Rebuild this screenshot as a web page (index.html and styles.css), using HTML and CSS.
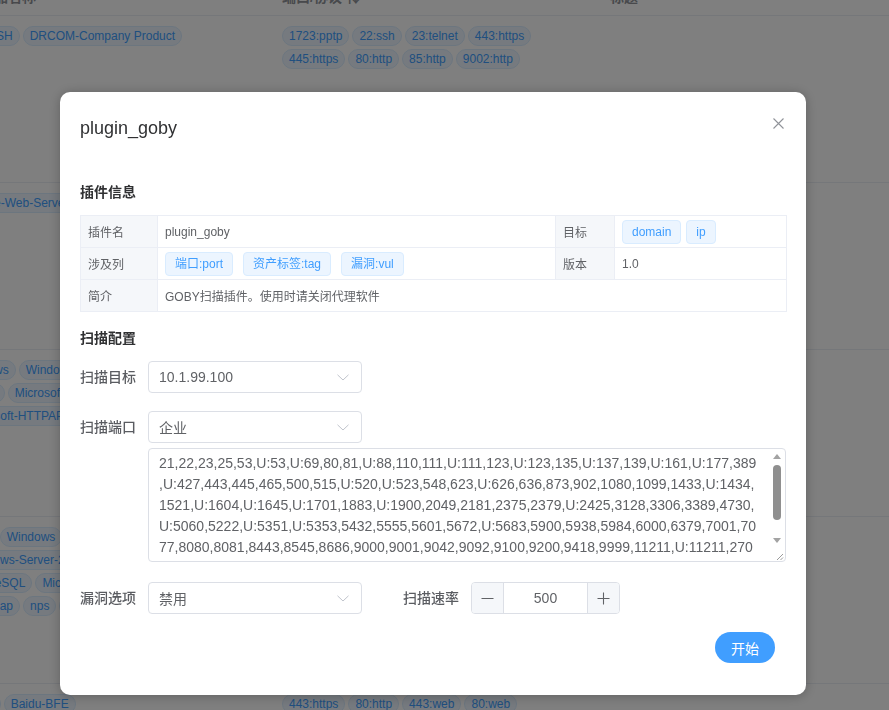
FILE: index.html
```html
<!DOCTYPE html>
<html lang="zh-CN">
<head>
<meta charset="utf-8">
<title>plugin_goby</title>
<link rel="stylesheet" href="styles.css">
</head>
<body>
<div class="page">
  <div class="grid-head">
    <div class="hcell">产品名称</div>
    <div class="hcell">端口/协议 ⇅</div>
    <div class="hcell">标题</div>
  </div>

  <div class="grid-row">
    <div class="cell">
      <div class="tagline o41"><span class="btag">SSH</span><span class="btag">DRCOM-Company Product</span></div>
    </div>
    <div class="cell">
      <div class="tagwrap">
        <span class="btag">1723:pptp</span><span class="btag">22:ssh</span><span class="btag">23:telnet</span><span class="btag">443:https</span>
        <span class="btag">445:https</span><span class="btag">80:http</span><span class="btag">85:http</span><span class="btag">9002:http</span>
      </div>
    </div>
    <div class="cell"></div>
  </div>

  <div class="grid-row">
    <div class="cell">
      <div class="tagline o13"><span class="btag">Apache-Web-Server</span></div>
    </div>
    <div class="cell"><div class="tagwrap"><span class="btag">80:http</span><span class="btag">443:https</span></div></div>
    <div class="cell"></div>
  </div>

  <div class="grid-row">
    <div class="cell">
      <div class="tagline o13"><span class="btag">Windows</span><span class="btag">Windows-Server-2012</span></div>
      <div class="tagline o36"><span class="btag">IIS</span><span class="btag">Microsoft-IIS</span></div>
      <div class="tagline o18"><span class="btag">Microsoft-HTTPAPI</span></div>
    </div>
    <div class="cell"><div class="tagwrap"><span class="btag">80:http</span><span class="btag">135:msrpc</span></div></div>
    <div class="cell"></div>
  </div>

  <div class="grid-row">
    <div class="cell">
      <div class="tagline o28"><span class="btag">IIS</span><span class="btag">Windows</span></div>
      <div class="tagline o19"><span class="btag">Windows-Server-2008</span></div>
      <div class="tagline o13"><span class="btag">PostgreSQL</span><span class="btag">Microsoft-SQL-Server</span></div>
      <div class="tagline o36"><span class="btag">nmap</span><span class="btag">nps</span><span class="btag">frp</span></div>
    </div>
    <div class="cell"><div class="tagwrap"><span class="btag">1433:mssql</span><span class="btag">5432:postgres</span></div></div>
    <div class="cell"></div>
  </div>

  <div class="grid-row">
    <div class="cell">
      <div class="tagline o32"><span class="btag">IIS</span><span class="btag">Baidu-BFE</span></div>
    </div>
    <div class="cell">
      <div class="tagwrap"><span class="btag">443:https</span><span class="btag">80:http</span><span class="btag">443:web</span><span class="btag">80:web</span></div>
    </div>
    <div class="cell"></div>
  </div>
</div>

<div class="overlay">
  <div class="dialog">
    <div class="dialog-header">
      <span class="dialog-title">plugin_goby</span>
      <button class="dialog-close" aria-label="close">
        <svg width="11" height="11" viewBox="0 0 11 11"><path d="M0.5 0.5 L10.5 10.5 M10.5 0.5 L0.5 10.5" stroke="#909399" stroke-width="1.1" fill="none"/></svg>
      </button>
    </div>
    <div class="dialog-body">
      <div class="section-title">插件信息</div>
      <table class="desc">
        <colgroup><col class="c1"><col class="c2"><col class="c3"><col class="c4"></colgroup>
        <tr>
          <td class="lbl">插件名</td>
          <td class="val">plugin_goby</td>
          <td class="lbl">目标</td>
          <td class="val"><span class="tag gap5">domain</span><span class="tag gap5">ip</span></td>
        </tr>
        <tr>
          <td class="lbl">涉及列</td>
          <td class="val"><span class="tag gap10">端口:port</span><span class="tag gap10">资产标签:tag</span><span class="tag gap10">漏洞:vul</span></td>
          <td class="lbl">版本</td>
          <td class="val">1.0</td>
        </tr>
        <tr>
          <td class="lbl">简介</td>
          <td class="val" colspan="3">GOBY扫描插件。使用时请关闭代理软件</td>
        </tr>
      </table>

      <div class="section-title second">扫描配置</div>
      <div class="form">
        <div class="form-item">
          <label class="form-label">扫描目标</label>
          <div class="select"><span>10.1.99.100</span>
            <svg class="chev" width="12" height="7" viewBox="0 0 12 7"><path d="M0.5 0.8 L6 6 L11.5 0.8" stroke="#c0c4cc" stroke-width="1" fill="none"/></svg>
          </div>
        </div>
        <div class="form-item ports">
          <label class="form-label">扫描端口</label>
          <div class="port-col">
            <div class="select"><span>企业</span>
              <svg class="chev" width="12" height="7" viewBox="0 0 12 7"><path d="M0.5 0.8 L6 6 L11.5 0.8" stroke="#c0c4cc" stroke-width="1" fill="none"/></svg>
            </div>
            <div class="textbox">
              <textarea class="ports-text" wrap="off" spellcheck="false">21,22,23,25,53,U:53,U:69,80,81,U:88,110,111,U:111,123,U:123,135,U:137,139,U:161,U:177,389
,U:427,443,445,465,500,515,U:520,U:523,548,623,U:626,636,873,902,1080,1099,1433,U:1434,
1521,U:1604,U:1645,U:1701,1883,U:1900,2049,2181,2375,2379,U:2425,3128,3306,3389,4730,
U:5060,5222,U:5351,U:5353,5432,5555,5601,5672,U:5683,5900,5938,5984,6000,6379,7001,70
77,8080,8081,8443,8545,8686,9000,9001,9042,9092,9100,9200,9418,9999,11211,U:11211,270
17,27018,U:47808,50000,50070,50075,61616,U:1645,U:1646,U:5351,U:5353,U:17185,U:20000
,U:30718,U:44818,U:47808</textarea>
              <div class="vscroll" aria-hidden="true">
                <span class="sb-btn">
                  <svg width="8" height="5" viewBox="0 0 8 5"><path d="M0 5 L4 0 L8 5 Z" fill="#a3a3a3"/></svg>
                </span>
                <span class="sb-track"><span class="sb-thumb"></span></span>
                <span class="sb-btn">
                  <svg width="8" height="5" viewBox="0 0 8 5"><path d="M0 0 L4 5 L8 0 Z" fill="#a3a3a3"/></svg>
                </span>
                <span class="sb-resizer">
                  <svg width="12" height="12" viewBox="0 0 12 12"><path d="M11 5 L5 11 M11 8.5 L8.5 11" stroke="#9a9a9a" stroke-width="1" fill="none"/></svg>
                </span>
              </div>
            </div>
          </div>
        </div>
        <div class="form-row">
          <div class="form-item inline">
            <label class="form-label">漏洞选项</label>
            <div class="select"><span>禁用</span>
              <svg class="chev" width="12" height="7" viewBox="0 0 12 7"><path d="M0.5 0.8 L6 6 L11.5 0.8" stroke="#c0c4cc" stroke-width="1" fill="none"/></svg>
            </div>
          </div>
          <div class="form-item inline">
            <label class="form-label">扫描速率</label>
            <div class="number">
              <span class="num-btn minus">
                <svg width="13" height="13" viewBox="0 0 13 13"><path d="M0.5 6.5 H12.5" stroke="#606266" stroke-width="1.1"/></svg>
              </span>
              <span class="num-val">500</span>
              <span class="num-btn plus">
                <svg width="13" height="13" viewBox="0 0 13 13"><path d="M0.5 6.5 H12.5 M6.5 0.5 V12.5" stroke="#606266" stroke-width="1.1"/></svg>
              </span>
            </div>
          </div>
        </div>
        <div class="actions">
          <button class="btn-primary">开始</button>
        </div>
      </div>
    </div>
  </div>
</div>
</body>
</html>
```

FILE: styles.css
```css
* { box-sizing: border-box; }
html, body { margin: 0; padding: 0; }
body {
  width: 889px;
  height: 710px;
  overflow: hidden;
  background: #fff;
  font-family: "Liberation Sans", "Noto Sans CJK SC", sans-serif;
  color: #606266;
}

/* ---------- background table ---------- */
.page {
  margin-left: -60px;
  width: 1000px;
}
.grid-head {
  display: grid;
  grid-template-columns: 342px 328px 1fr;
  height: 40px;
  margin-top: -24px;
  border-bottom: 1px solid #ebeef5;
  align-items: center;
}
.hcell {
  font-size: 14px;
  font-weight: bold;
  color: #909399;
}
.grid-head .hcell:first-child { padding-left: 40px; }
.grid-row {
  display: grid;
  grid-template-columns: 342px 328px 1fr;
  height: 167px;
  border-bottom: 1px solid #ebeef5;
  padding-top: 10px;
}
.cell { overflow: hidden; }
.grid-row .cell:first-child { overflow: visible; }
.tagline {
  display: flex;
  gap: 3px;
  white-space: nowrap;
  margin-bottom: 3px;
}
.tagwrap {
  display: flex;
  flex-wrap: wrap;
  gap: 3px;
  width: 250px;
}
.o13 { margin-left: 13px; }
.o18 { margin-left: 18px; }
.o19 { margin-left: 19px; }
.o28 { margin-left: 28px; }
.o32 { margin-left: 32px; }
.o36 { margin-left: 36px; }
.o41 { margin-left: 41px; }
.btag {
  display: inline-block;
  height: 20px;
  line-height: 18px;
  padding: 0 6px;
  font-size: 12px;
  color: #409eff;
  background: #ecf5ff;
  border: 1px solid #d9ecff;
  border-radius: 10px;
  white-space: nowrap;
}

/* ---------- overlay & dialog ---------- */
.overlay {
  position: fixed;
  inset: 0;
  background: rgba(0, 0, 0, 0.5);
}
.dialog {
  position: relative;
  margin: 92px 0 0 60px;
  width: 746px;
  background: #fff;
  border-radius: 10px;
  box-shadow: 0 1px 12px rgba(0, 0, 0, 0.25);
}
.dialog-header {
  padding: 24px 20px 10px;
}
.dialog-title {
  display: block;
  font-size: 18px;
  line-height: 24px;
  color: #303133;
}
.dialog-close {
  position: absolute;
  top: 26px;
  right: 22px;
  width: 11px;
  height: 11px;
  padding: 0;
  border: 0;
  background: transparent;
  display: flex;
}
.dialog-body {
  padding: 30px 20px 32px;
}
.section-title {
  font-size: 14px;
  line-height: 24px;
  font-weight: bold;
  color: #303133;
  margin-bottom: 11px;
}
.section-title.second { margin-top: 14px; }

.desc {
  width: 706px;
  border-collapse: collapse;
  table-layout: fixed;
  font-size: 12px;
}
.desc .c1 { width: 77px; }
.desc .c2 { width: 398px; }
.desc .c3 { width: 59px; }
.desc .c4 { width: 172px; }
.desc td {
  border: 1px solid #ebeef5;
  height: 32px;
  padding: 0 7px;
  vertical-align: middle;
}
.desc td.lbl {
  background: #f5f7fa;
  color: #606266;
}
.desc td.val { color: #606266; padding-left: 7px; }
.tag {
  display: inline-block;
  height: 24px;
  line-height: 22px;
  padding: 0 9px;
  font-size: 12px;
  color: #409eff;
  background: #ecf5ff;
  border: 1px solid #d9ecff;
  border-radius: 4px;
  vertical-align: middle;
}
.tag.gap10 { margin-right: 10px; }
.tag.gap5 { margin-right: 5px; }

/* ---------- form ---------- */
.form { font-size: 14px; }
.form-item {
  display: flex;
  align-items: flex-start;
  margin-bottom: 18px;
}
.form-label {
  width: 68px;
  line-height: 32px;
  font-size: 14px;
  font-weight: 500;
  color: #5a5c61;
}
.select {
  width: 214px;
  height: 32px;
  border: 1px solid #dcdfe6;
  border-radius: 4px;
  display: flex;
  align-items: center;
  justify-content: space-between;
  padding: 0 12px 0 10px;
  color: #606266;
  font-size: 14px;
}
.chev { display: block; }
.port-col {
  display: flex;
  flex-direction: column;
  gap: 5px;
}
.form-item.ports { margin-bottom: 20px; }
.textbox {
  display: flex;
  width: 638px;
  height: 114px;
  border: 1px solid #dcdfe6;
  border-radius: 4px;
  overflow: hidden;
  background: #fff;
}
.ports-text {
  flex: 1;
  min-width: 0;
  height: 112px;
  border: 0;
  padding: 4px 10px;
  font-family: "Liberation Sans", "Noto Sans CJK SC", sans-serif;
  font-size: 14px;
  line-height: 21px;
  color: #606266;
  white-space: pre;
  overflow: hidden;
  resize: none;
  outline: none;
  display: block;
  background: transparent;
}
.vscroll {
  width: 14px;
  display: flex;
  flex-direction: column;
  margin-right: 1px;
}
.sb-btn {
  height: 14px;
  display: flex;
  align-items: center;
  justify-content: center;
}
.sb-track {
  flex: 1;
  display: flex;
  justify-content: center;
  padding-top: 2px;
}
.sb-thumb {
  width: 8px;
  height: 55px;
  border-radius: 4px;
  background: #8f8f8f;
}
.sb-resizer {
  height: 14px;
  display: flex;
  align-items: flex-end;
  justify-content: flex-end;
}
.form-row {
  display: flex;
  gap: 41px;
}
.form-item.inline { margin-bottom: 18px; }
.number {
  display: flex;
  width: 149px;
  height: 32px;
  border: 1px solid #dcdfe6;
  border-radius: 4px;
  overflow: hidden;
}
.num-btn {
  width: 32px;
  background: #f5f7fa;
  display: flex;
  align-items: center;
  justify-content: center;
}
.num-btn.minus { border-right: 1px solid #dcdfe6; }
.num-btn.plus { border-left: 1px solid #dcdfe6; }
.num-val {
  flex: 1;
  text-align: center;
  line-height: 30px;
  font-size: 14px;
  color: #606266;
}
.actions {
  display: flex;
  justify-content: flex-end;
  padding-right: 11px;
}
.btn-primary {
  height: 31px;
  width: 60px;
  border: 0;
  border-radius: 16px;
  background: #409eff;
  color: #fff;
  font-family: "Liberation Sans", "Noto Sans CJK SC", sans-serif;
  font-size: 14px;
  padding: 0;
}
```
